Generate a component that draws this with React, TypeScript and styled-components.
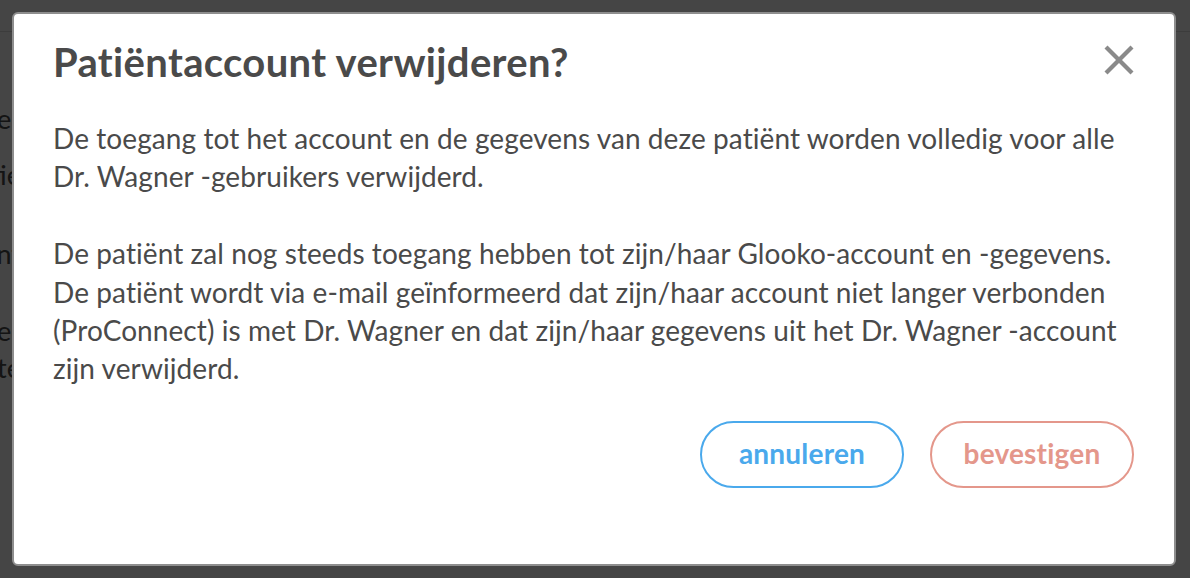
import React from "react";
import styled, { createGlobalStyle } from "styled-components";

const GlobalStyle = createGlobalStyle`
  html, body {
    margin: 0;
    padding: 0;
    background: #ffffff;
    font-family: Lato, "Noto Sans", sans-serif;
  }
  * { box-sizing: border-box; }
`;

const Page = styled.div`
  width: 1190px;
  height: 578px;
  overflow: hidden;
  background: #ffffff;
  color: #4a4a4a;
`;

const PageHeader = styled.div`
  height: 32px;
  border-bottom: 1px solid #dddddd;
`;

const SideColumn = styled.div`
  width: 21px;
  display: flex;
  flex-direction: column;
`;

const SideRow = styled.div<{ $gap: number }>`
  margin-top: ${(p) => p.$gap}px;
  height: 24px;
  line-height: 24px;
  font-size: 27px;
  display: flex;
  justify-content: flex-end;
  white-space: nowrap;
`;

const Overlay = styled.div`
  position: fixed;
  inset: 0;
  background: rgba(0, 0, 0, 0.73);
  display: flex;
  padding: 12px 14px 12px 12px;
`;

const Modal = styled.div`
  flex: 1;
  display: flex;
  flex-direction: column;
  background: #ffffff;
  border: 2px solid #8e8e8e;
  border-radius: 6px;
  padding: 24px 40px 0 39px;
`;

const TitleRow = styled.div`
  display: flex;
  justify-content: space-between;
  align-items: flex-start;
`;

const Title = styled.h2`
  margin: 0;
  font-family: Lato, "Noto Sans", sans-serif;
  font-weight: 700;
  font-size: 40px;
  letter-spacing: 0.35px;
  line-height: 48px;
  color: #4a4a4a;
`;

const CloseButton = styled.button`
  margin-top: 7px;
  width: 31px;
  height: 30px;
  padding: 0;
  border: none;
  background: transparent;
  cursor: pointer;
  display: flex;
  align-items: center;
  justify-content: center;
`;

const Body = styled.div`
  margin-top: 33px;
  font-size: 28px;
  letter-spacing: 0.08px;
  line-height: 38.4px;
  color: #4a4a4a;
`;

const Paragraph = styled.p`
  margin: 0;
  & + & {
    margin-top: 38.4px;
  }
`;

const Footer = styled.div`
  margin-top: 33px;
  display: flex;
  justify-content: flex-end;
  gap: 26px;
`;

const PillButton = styled.button<{ $tone: "blue" | "red" }>`
  width: 204px;
  height: 67px;
  border-radius: 34px;
  background: #ffffff;
  border: 2px solid ${(p) => (p.$tone === "blue" ? "#4aa9ec" : "#e4978b")};
  color: ${(p) => (p.$tone === "blue" ? "#4aa9ec" : "#e4978b")};
  font-family: Lato, "Noto Sans", sans-serif;
  font-weight: 700;
  font-size: 28px;
  letter-spacing: 0.2px;
  padding: 0 0 2px;
  cursor: pointer;
`;

const CloseIcon = () => (
  <svg width="30" height="30" viewBox="0 0 30 30">
    <line x1="2" y1="2" x2="28" y2="28" stroke="#8a8a8a" strokeWidth="4.2" />
    <line x1="28" y1="2" x2="2" y2="28" stroke="#8a8a8a" strokeWidth="4.2" />
  </svg>
);

export default function App() {
  return (
    <Page>
      <GlobalStyle />
      <PageHeader />
      <SideColumn>
        <SideRow $gap={75}>ver</SideRow>
        <SideRow $gap={32}>atie</SideRow>
        <SideRow $gap={55}>ant</SideRow>
        <SideRow $gap={53}>ver</SideRow>
        <SideRow $gap={13}>ate</SideRow>
      </SideColumn>
      <Overlay>
        <Modal>
          <TitleRow>
            <Title>Patiëntaccount verwijderen?</Title>
            <CloseButton aria-label="Sluiten">
              <CloseIcon />
            </CloseButton>
          </TitleRow>
          <Body>
            <Paragraph>
              De toegang tot het account en de gegevens van deze patiënt worden volledig voor alle Dr. Wagner -gebruikers verwijderd.
            </Paragraph>
            <Paragraph>
              De patiënt zal nog steeds toegang hebben tot zijn/haar Glooko-account en -gegevens. De patiënt wordt via e-mail geïnformeerd dat zijn/haar account niet langer verbonden (ProConnect) is met Dr. Wagner en dat zijn/haar gegevens uit het Dr. Wagner -account zijn verwijderd.
            </Paragraph>
          </Body>
          <Footer>
            <PillButton $tone="blue">annuleren</PillButton>
            <PillButton $tone="red">bevestigen</PillButton>
          </Footer>
        </Modal>
      </Overlay>
    </Page>
  );
}
